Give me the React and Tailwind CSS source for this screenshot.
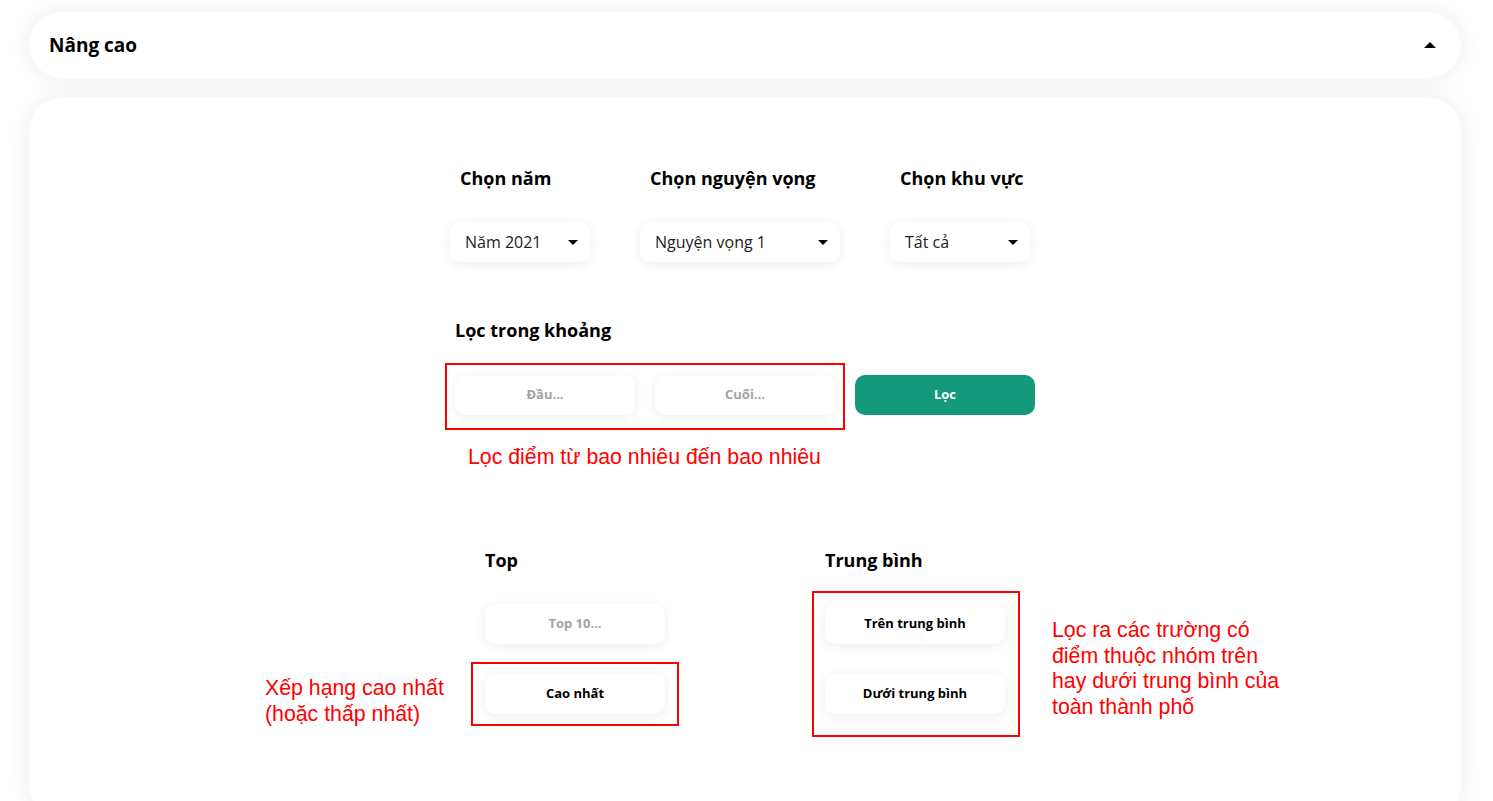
import React from 'react';

const uiFont = { fontFamily: '"Open Sans", Lato, sans-serif' };

function Caret({ up = false }) {
  return up ? (
    <span className="inline-block h-0 w-0 border-x-[6px] border-b-[6px] border-x-transparent border-b-black" />
  ) : (
    <span className="inline-block h-0 w-0 border-x-[5px] border-t-[5px] border-x-transparent border-t-black" />
  );
}

function Select({ width, label, value }) {
  return (
    <div className="flex flex-col">
      <div className="pl-[10px] text-[18px] font-bold leading-[20px] text-black">{label}</div>
      <div
        className={`mt-[34px] flex h-[40px] ${width} items-center justify-between rounded-[10px] bg-white pl-[15px] pr-[12px] shadow-[0_2px_12px_rgba(0,0,0,0.07)]`}
      >
        <span className="text-[16px] text-[#222]">{value}</span>
        <Caret />
      </div>
    </div>
  );
}

function Field({ children, muted = false, className = '' }) {
  return (
    <div
      className={`flex h-[40px] w-[180px] items-center justify-center rounded-[10px] bg-white text-[13px] font-bold shadow-[0_2px_12px_rgba(0,0,0,0.07)] ${
        muted ? 'text-[#a3a3a3]' : 'text-black'
      } ${className}`}
    >
      {children}
    </div>
  );
}

const note = { fontFamily: '"Liberation Sans", Arial, sans-serif' };

export default function App() {
  return (
    <div className="min-h-[801px] bg-white pl-[29px] pr-[32px] pt-[12px]" style={uiFont}>
      {/* Header */}
      <div className="flex h-[66px] items-center justify-between rounded-[33px] bg-white pl-[20px] pr-[25px] shadow-[0_0_24px_rgba(0,0,0,0.07)]">
        <span className="text-[19px] font-bold text-black">Nâng cao</span>
        <Caret up />
      </div>

      {/* Body */}
      <div className="mt-[20px] h-[720px] rounded-[32px] bg-white pt-[70px] shadow-[0_0_24px_rgba(0,0,0,0.07)]">
        <div className="mx-auto w-[580px]">
          {/* Selects */}
          <div className="-ml-[5px] flex gap-[50px]">
            <Select width="w-[140px]" label="Chọn năm" value="Năm 2021" />
            <Select width="w-[200px]" label="Chọn nguyện vọng" value="Nguyện vọng 1" />
            <Select width="w-[140px]" label="Chọn khu vực" value="Tất cả" />
          </div>

          {/* Range */}
          <div className="mt-[58px] text-[18px] font-bold leading-[20px] text-black">Lọc trong khoảng</div>
          <div className="-ml-[10px] mt-[23px] flex items-start">
            <div className="flex gap-[20px] border-2 border-[#ff0000] px-[8px] pb-[13px] pt-[10px]">
              <Field muted>Đầu...</Field>
              <Field muted>Cuối...</Field>
            </div>
            <button className="ml-[10px] mt-[12px] flex h-[40px] w-[180px] items-center justify-center rounded-[10px] bg-[#139a7a] text-[13px] font-bold text-white">
              Lọc
            </button>
          </div>
          <div className="ml-[13px] mt-[15px] text-[21.3px] leading-[25px] text-[#ff0000]" style={note}>
            Lọc điểm từ bao nhiêu đến bao nhiêu
          </div>
        </div>

        {/* Top / Trung bình */}
        <div className="mx-auto mt-[80px] flex w-[520px] gap-[160px]">
          <div className="relative w-[180px]">
            <div className="text-[18px] font-bold leading-[20px] text-black">Top</div>
            <Field muted className="mt-[34px]">Top 10...</Field>
            <div className="relative -mx-[14px] mt-[18px] border-2 border-[#ff0000] px-[12px] py-[10px]">
              <Field>Cao nhất</Field>
              <div
                className="absolute left-[-208px] top-[11px] w-[200px] text-[21.3px] leading-[26px] text-[#ff0000]"
                style={note}
              >
                Xếp hạng cao nhất
                <br />
                (hoặc thấp nhất)
              </div>
            </div>
          </div>

          <div className="w-[180px]">
            <div className="text-[18px] font-bold leading-[20px] text-black">Trung bình</div>
            <div className="mt-[21px] flex items-start">
              <div className="-ml-[13px] flex flex-col gap-[30px] border-2 border-[#ff0000] pb-[21px] pl-[11px] pr-[13px] pt-[11px]">
                <Field>Trên trung bình</Field>
                <Field>Dưới trung bình</Field>
              </div>
              <div
                className="ml-[32px] mt-[27px] w-[280px] shrink-0 text-[21.3px] leading-[25.5px] text-[#ff0000]"
                style={note}
              >
                Lọc ra các trường có
                <br />
                điểm thuộc nhóm trên
                <br />
                hay dưới trung bình của
                <br />
                toàn thành phố
              </div>
            </div>
          </div>
        </div>
      </div>
    </div>
  );
}
